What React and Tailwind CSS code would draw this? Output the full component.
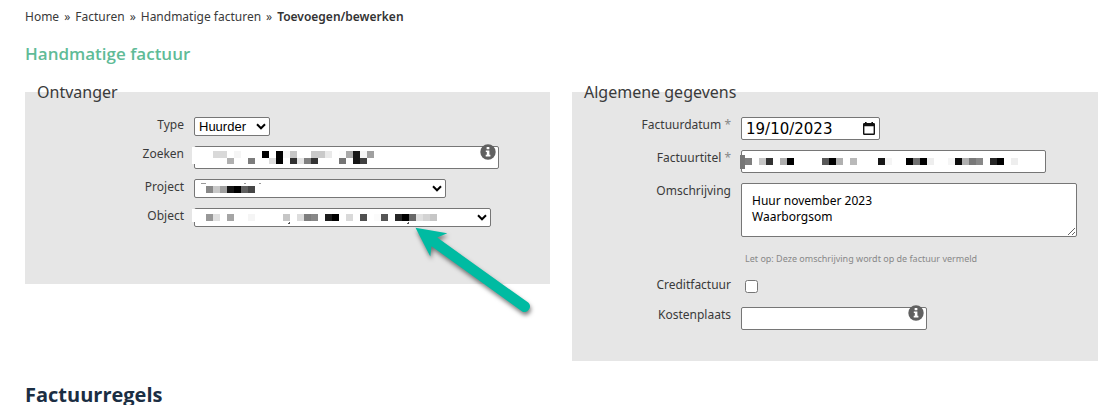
import React from "react";

const FIELD = "block w-full rounded-[2px] border border-[#767676] bg-white text-black outline-none";

const ZOEKEN = [
  [213, 0, "#d9d9d9"], [220, 0, "#d9d9d9"], [234, 0, "#f5f5f5"], [262, 0, "#000"], [276, 0, "#000"],
  [283, 0, "#f5f5f5"], [290, 0, "#c6c6c6"], [311, 0, "#c9c9c9"], [318, 0, "#c9c9c9"], [325, 0, "#e9e9e9"],
  [339, 0, "#fcfcfc"], [346, 0, "#a9a9a9"], [353, 0, "#161616"], [360, 0, "#f5f5f5"], [367, 0, "#a0a0a0"],
  [227, 7, "#b0b0b0"], [248, 7, "#7c7c7c"], [269, 7, "#ddd"], [276, 7, "#000"], [290, 7, "#303030"],
  [297, 7, "#e4e4e4"], [304, 7, "#808080"], [311, 7, "#333"], [339, 7, "#757575"], [353, 7, "#161616"],
  [360, 7, "#404040"],
];
const PROJECT = [
  [206, 0, "#888"], [213, 0, "#c8c8c8"], [220, 0, "#a0a0a0"], [227, 0, "#161616"], [234, 0, "#000"],
  [241, 0, "#606060"], [248, 0, "#464646"],
];
const OBJECT = [
  [206, 0, "#989898"], [213, 0, "#e0e0e0"], [227, 0, "#a5a5a5"], [248, 0, "#f5f5f5"], [283, 0, "#c6c6c6"],
  [297, 0, "#ddd"], [304, 0, "#7d7d7d"], [311, 0, "#888"], [325, 0, "#1c1c1c"], [332, 0, "#000"],
  [346, 0, "#d9d9d9"], [360, 0, "#505050"], [374, 0, "#fbfbfb"], [381, 0, "#555"], [395, 0, "#262626"],
  [402, 0, "#000"], [409, 0, "#686868"], [416, 0, "#e0e0e0"], [423, 0, "#d3d3d3"], [430, 0, "#c6c6c6"],
];
const TITEL = [
  [745, 0, "#7f7f7f"], [759, 0, "#c6c6c6"], [766, 0, "#333"], [780, 0, "#adadad"], [787, 0, "#000"],
  [822, 0, "#585858"], [829, 0, "#000"], [836, 0, "#b0b0b0"], [850, 0, "#b9b9b9"], [878, 0, "#161616"],
  [885, 0, "#f5f5f5"], [906, 0, "#000"], [913, 0, "#707070"], [920, 0, "#000"], [927, 0, "#eee"],
  [948, 0, "#f5f5f5"], [955, 0, "#0c0c0c"], [962, 0, "#b0b0b0"], [969, 0, "#787878"], [976, 0, "#888"],
  [990, 0, "#262626"], [997, 0, "#000"], [1011, 0, "#eee"],
];

/* Redacted value: grey cells on a 7px grid. */
function Mosaic({ cells, origin, top, children }) {
  return (
    <svg className="pointer-events-none absolute inset-0 h-full w-full overflow-visible" aria-hidden="true" shapeRendering="crispEdges">
      {children}
      {cells.map(([x, y, fill]) => (
        <rect key={`${x}-${y}`} x={x - origin} y={y + top} width="7" height={y ? 6 : 7} fill={fill} />
      ))}
    </svg>
  );
}

function InfoIcon() {
  return (
    <svg className="pointer-events-none absolute -top-[2px] right-[3px] size-4" viewBox="0 0 16 16" aria-hidden="true">
      <circle cx="8" cy="8" r="7.7" fill="#606060" />
      <rect x="6.6" y="2.9" width="2.8" height="2.4" rx=".5" fill="#fff" />
      <path d="M5.8 6.4h3.6v4.4h1v1.7H5.7v-1.7h1.1V8h-1z" fill="#fff" />
    </svg>
  );
}

function Chevron() {
  return (
    <svg className="pointer-events-none absolute right-1 top-[6px] h-[7px] w-[10px]" viewBox="0 0 10 7" aria-hidden="true">
      <path d="M1 1.3l4 4 4-4" fill="none" stroke="#000" strokeWidth="2" />
    </svg>
  );
}

function Row({ id, label, required, children }) {
  return (
    <div className="grid grid-cols-[159px_minmax(0,1fr)] items-start gap-x-[10px]">
      <label htmlFor={id} className="text-right text-xs leading-4">
        {label}
        {required && <span className="text-[#888]"> *</span>}
      </label>
      {children}
    </div>
  );
}

function Panel({ title, className, children }) {
  return (
    <fieldset className={`min-w-0 bg-[#e6e6e6] ${className}`}>
      <legend className="ml-3 text-base leading-6">{title}</legend>
      <div className="flex flex-col gap-[10px] pt-[13px]">{children}</div>
    </fieldset>
  );
}

function Arrow() {
  return (
    <svg className="pointer-events-none absolute left-[216px] top-[16px] z-10 h-[96px] w-[126px] overflow-visible drop-shadow-[1px_3px_2px_rgba(0,0,0,0.5)]" viewBox="410 224 126 96" aria-hidden="true">
      <path d="M415.5 227.7L447.3 233.3L437.2 237.6L528.2 302.6A5.4 5.4 0 0 1 522.2 311.4L431.5 246.3L430.3 256.4Z" fill="#00bba2" />
    </svg>
  );
}

export default function App() {
  return (
    <main className="bg-white pl-[25px] pr-[18px] pt-[9px] font-['Noto_Sans',sans-serif] text-[#3a3a3a]">
      <nav aria-label="Breadcrumb" className="flex gap-[5px] text-xs leading-4">
        <a href="#home">Home</a>
        <span>»</span>
        <a href="#facturen">Facturen</a>
        <span>»</span>
        <a href="#handmatig">Handmatige facturen</a>
        <span>»</span>
        <span className="font-semibold text-[#333]" aria-current="page">Toevoegen/bewerken</span>
      </nav>

      <h1 className="mt-[17px] font-['Open_Sans',sans-serif] text-[17px] font-semibold leading-6 text-[#5fbb97]">Handmatige factuur</h1>

      <form className="mt-[14px] grid grid-cols-[525fr_526fr] items-start gap-[22px]">
        <Panel title="Ontvanger" className="pb-[57px]">
          <Row id="type" label="Type">
            <div className="relative w-[76px]">
              <select id="type" className={`${FIELD} h-[19px] appearance-none pl-1 font-['Liberation_Sans',sans-serif] text-[13px] leading-4`}>
                <option>Huurder</option>
              </select>
              <Chevron />
            </div>
          </Row>
          <Row id="zoeken" label="Zoeken">
            <div className="relative w-[305px] max-w-full">
              <input id="zoeken" type="text" className={`${FIELD} h-[23px]`} />
              <Mosaic cells={ZOEKEN} origin={194} top={5}>
                <rect x="-2" y="1" width="8" height="17" fill="#fff" />
              </Mosaic>
              <InfoIcon />
            </div>
          </Row>
          <Row id="project" label="Project">
            <div className="relative w-[252px] max-w-full">
              <select id="project" className={`${FIELD} h-[19px] appearance-none`} />
              <Mosaic cells={PROJECT} origin={194} top={7}>
                <path d="M7 4.500h5M50 4.500h2M65 4.500h2" stroke="#999" />
              </Mosaic>
              <Chevron />
            </div>
          </Row>
          <Row id="object" label="Object">
            <div className="relative w-[297px] max-w-full">
              <select id="object" className={`${FIELD} h-[19px] appearance-none`} />
              <Mosaic cells={OBJECT} origin={194} top={6}>
                <rect x="-2" y="1" width="8" height="13" fill="#fff" />
                <path d="M95 14.500h1M94 15.500h2M214 14.500h1M213 15.500h2" stroke="#555" />
              </Mosaic>
              <Chevron />
              <Arrow />
            </div>
          </Row>
        </Panel>

        <Panel title="Algemene gegevens" className="pb-[31px]">
          <Row id="datum" label="Factuurdatum" required>
            <div className="relative w-[139px]">
              <input id="datum" type="text" defaultValue="19/10/2023" className={`${FIELD} h-[23px] pl-1 font-['DejaVu_Sans',sans-serif] text-[15px] leading-5`} />
              <button type="button" aria-label="Kies datum" className="absolute right-[5px] top-[5px]">
                <svg className="block h-[13px] w-[12px]" viewBox="0 0 12 13">
                  <path d="M2 0h1.6v1h4.8V0H10v1h.8q1.2 0 1.2 1.2v9.6q0 1.2-1.2 1.2H1.2Q0 13 0 11.800V2.200Q0 1 1.200 1H2zM1.400 4.300v7.300h9.200V4.300z" fill="#111" fillRule="evenodd" />
                </svg>
              </button>
            </div>
          </Row>
          <Row id="titel" label="Factuurtitel" required>
            <div className="relative w-[305px] max-w-full">
              <input id="titel" type="text" className={`${FIELD} h-[23px]`} />
              <Mosaic cells={TITEL} origin={741} top={8}>
                <rect x="-1" y="5" width="5" height="14" fill="#767676" />
              </Mosaic>
            </div>
          </Row>
          <Row id="omschrijving" label="Omschrijving">
            <div className="w-[336px] max-w-full">
              <textarea id="omschrijving" defaultValue={"Huur november 2023\nWaarborgsom"} className={`${FIELD} h-[54px] px-[10px] py-[9px] text-xs leading-4`} />
              <p className="mt-[14px] pl-1 text-[9px] leading-4 text-[#888]">Let op: Deze omschrijving wordt op de factuur vermeld</p>
            </div>
          </Row>
          <Row id="credit" label="Creditfactuur">
            <div className="flex h-5 items-start pl-1 pt-[3px]">
              <input id="credit" type="checkbox" className="size-[13px]" />
            </div>
          </Row>
          <Row id="kostenplaats" label="Kostenplaats">
            <div className="relative w-[186px]">
              <input id="kostenplaats" type="text" className={`${FIELD} h-[23px]`} />
              <InfoIcon />
            </div>
          </Row>
        </Panel>
      </form>

      <h2 className="mt-6 font-['Open_Sans',sans-serif] text-xl font-bold leading-5 text-[#1b2e43]">Factuurregels</h2>
    </main>
  );
}
